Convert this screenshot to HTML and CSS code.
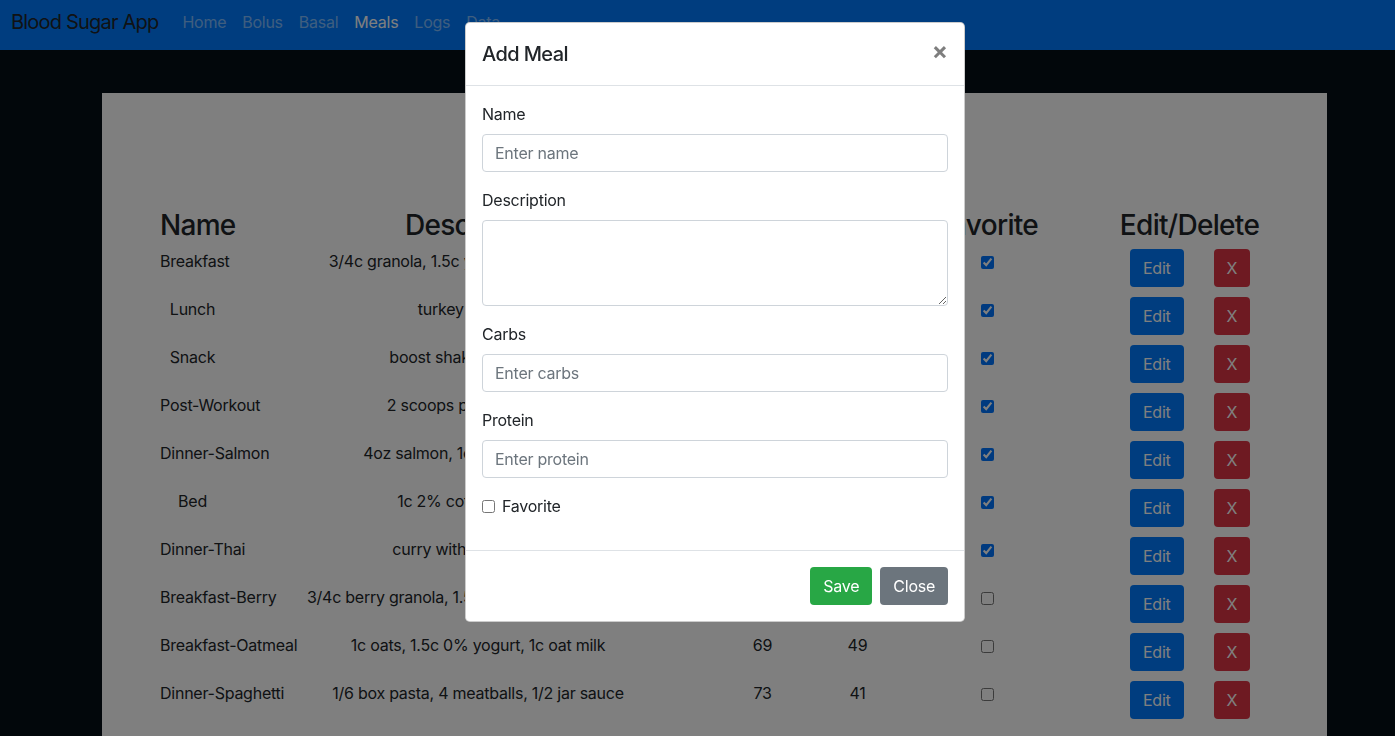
FILE: index.html
```html
<!DOCTYPE html>
<html lang="en">
<head>
<meta charset="utf-8">
<title>Blood Sugar App - Meals</title>
<link rel="stylesheet" href="styles.css">
</head>
<body>
<nav class="navbar">
  <a class="brand" href="#">Blood Sugar App</a>
  <ul class="nav-links">
    <li><a href="#">Home</a></li>
    <li><a href="#">Bolus</a></li>
    <li><a href="#">Basal</a></li>
    <li><a href="#" class="active">Meals</a></li>
    <li><a href="#">Logs</a></li>
    <li><a href="#">Data</a></li>
  </ul>
</nav>

<main class="page">
  <section class="card">
    <div class="meal-table">
      <div class="row head">
        <div class="cell name">Name</div>
        <div class="cell">Description</div>
        <div class="cell">Carbs</div>
        <div class="cell">Protein</div>
        <div class="cell">Favorite</div>
        <div class="cell">Edit/Delete</div>
      </div>
      <div class="row item">
        <div class="cell name">Breakfast</div>
        <div class="cell">3/4c granola, 1.5c yogurt, 1c almond milk</div>
        <div class="cell">72</div>
        <div class="cell">45</div>
        <div class="cell"><input type="checkbox" class="fav" checked></div>
        <div class="cell actions"><button class="btn btn-edit">Edit</button><button class="btn btn-del">X</button></div>
      </div>
      <div class="row item">
        <div class="cell name">Lunch</div>
        <div class="cell">turkey sandwich</div>
        <div class="cell">40</div>
        <div class="cell">30</div>
        <div class="cell"><input type="checkbox" class="fav" checked></div>
        <div class="cell actions"><button class="btn btn-edit">Edit</button><button class="btn btn-del">X</button></div>
      </div>
      <div class="row item">
        <div class="cell name">Snack</div>
        <div class="cell">boost shake, protein bar</div>
        <div class="cell">45</div>
        <div class="cell">35</div>
        <div class="cell"><input type="checkbox" class="fav" checked></div>
        <div class="cell actions"><button class="btn btn-edit">Edit</button><button class="btn btn-del">X</button></div>
      </div>
      <div class="row item">
        <div class="cell name">Post-Workout</div>
        <div class="cell">2 scoops protein powder</div>
        <div class="cell">10</div>
        <div class="cell">50</div>
        <div class="cell"><input type="checkbox" class="fav" checked></div>
        <div class="cell actions"><button class="btn btn-edit">Edit</button><button class="btn btn-del">X</button></div>
      </div>
      <div class="row item">
        <div class="cell name">Dinner-Salmon</div>
        <div class="cell">4oz salmon, 1c rice, vegetables</div>
        <div class="cell">55</div>
        <div class="cell">32</div>
        <div class="cell"><input type="checkbox" class="fav" checked></div>
        <div class="cell actions"><button class="btn btn-edit">Edit</button><button class="btn btn-del">X</button></div>
      </div>
      <div class="row item">
        <div class="cell name">Bed</div>
        <div class="cell">1c 2% cottage cheese</div>
        <div class="cell">10</div>
        <div class="cell">28</div>
        <div class="cell"><input type="checkbox" class="fav" checked></div>
        <div class="cell actions"><button class="btn btn-edit">Edit</button><button class="btn btn-del">X</button></div>
      </div>
      <div class="row item">
        <div class="cell name">Dinner-Thai</div>
        <div class="cell">curry with rice, chicken</div>
        <div class="cell">80</div>
        <div class="cell">35</div>
        <div class="cell"><input type="checkbox" class="fav" checked></div>
        <div class="cell actions"><button class="btn btn-edit">Edit</button><button class="btn btn-del">X</button></div>
      </div>
      <div class="row item">
        <div class="cell name">Breakfast-Berry</div>
        <div class="cell">3/4c berry granola, 1.5c yogurt, 1c almond milk</div>
        <div class="cell">74</div>
        <div class="cell">45</div>
        <div class="cell"><input type="checkbox" class="fav"></div>
        <div class="cell actions"><button class="btn btn-edit">Edit</button><button class="btn btn-del">X</button></div>
      </div>
      <div class="row item">
        <div class="cell name">Breakfast-Oatmeal</div>
        <div class="cell">1c oats, 1.5c 0% yogurt, 1c oat milk</div>
        <div class="cell">69</div>
        <div class="cell">49</div>
        <div class="cell"><input type="checkbox" class="fav"></div>
        <div class="cell actions"><button class="btn btn-edit">Edit</button><button class="btn btn-del">X</button></div>
      </div>
      <div class="row item">
        <div class="cell name">Dinner-Spaghetti</div>
        <div class="cell">1/6 box pasta, 4 meatballs, 1/2 jar sauce</div>
        <div class="cell">73</div>
        <div class="cell">41</div>
        <div class="cell"><input type="checkbox" class="fav"></div>
        <div class="cell actions"><button class="btn btn-edit">Edit</button><button class="btn btn-del">X</button></div>
      </div>
    </div>
  </section>
</main>

<div class="backdrop"></div>

<div class="modal" role="dialog">
  <div class="modal-header">
    <h5 class="modal-title">Add Meal</h5>
    <button class="close" type="button">&times;</button>
  </div>
  <div class="modal-body">
    <div class="field">
      <label class="label">Name</label>
      <input class="input" type="text" placeholder="Enter name">
    </div>
    <div class="field">
      <label class="label">Description</label>
      <textarea class="input textarea" rows="3"></textarea>
    </div>
    <div class="field">
      <label class="label">Carbs</label>
      <input class="input" type="text" placeholder="Enter carbs">
    </div>
    <div class="field">
      <label class="label">Protein</label>
      <input class="input" type="text" placeholder="Enter protein">
    </div>
    <div class="field check">
      <input type="checkbox" class="check-input" id="fav">
      <label for="fav" class="check-label">Favorite</label>
    </div>
  </div>
  <div class="modal-footer">
    <button class="btn btn-save">Save</button>
    <button class="btn btn-close">Close</button>
  </div>
</div>
</body>
</html>
```
FILE: styles.css
```css
* { box-sizing: border-box; }

body {
  margin: 0;
  height: 736px;
  overflow: hidden;
  background: #040e16;
  font-family: Inter, "Liberation Sans", Arial, sans-serif;
  font-size: 16px;
  line-height: 24px;
  letter-spacing: -0.25px;
  color: #212529;
}

/* navbar */
.navbar {
  height: 50px;
  background: #007bff;
  display: flex;
  align-items: center;
  padding: 0 11px 6px;
}
.brand {
  font-size: 20px;
  line-height: 30px;
  letter-spacing: -0.8px;
  color: #212529;
  text-decoration: none;
  margin-right: 16px;
}
.nav-links {
  display: flex;
  list-style: none;
  margin: 0;
  padding: 0;
}
.nav-links a {
  display: block;
  padding: 0 8px;
  color: rgba(255, 255, 255, 0.5);
  text-decoration: none;
}
.nav-links a.active { color: #fff; }

/* page */
.page { padding: 43px 0 0 102px; }
.card {
  width: 1225px;
  height: 700px;
  background: #fff;
  padding: 116px 0 0 58px;
}
.row {
  display: grid;
  grid-template-columns: 65px 506px 63px 127px 132px 273px;
}
.row.head { height: 35px; }
.row.item { height: 48px; }
.cell {
  text-align: center;
  white-space: nowrap;
  padding: 5px 0;
}
.head .cell {
  font-size: 28px;
  font-weight: 500;
  line-height: 33.6px;
  letter-spacing: -0.7px;
  padding: 0;
}
.fav {
  margin: 0;
  width: 13px;
  height: 13px;
  vertical-align: middle;
}
.actions {
  display: flex;
  gap: 30px;
  padding-left: 77px;
}

.btn {
  font-family: inherit;
  font-size: 16px;
  line-height: 24px;
  letter-spacing: -0.25px;
  padding: 6px 12px;
  border: 1px solid transparent;
  border-radius: 4px;
  color: #fff;
  cursor: pointer;
}
.btn-edit { background: #007bff; }
.btn-del { background: #dc3545; }
.btn-save { background: #28a745; margin: 4px; }
.btn-close { background: #6c757d; margin: 4px; }

/* modal */
.backdrop {
  position: fixed;
  inset: 0;
  background: rgba(0, 0, 0, 0.5);
  z-index: 10;
}
.modal {
  position: fixed;
  top: 22px;
  left: 465px;
  width: 500px;
  background: #fff;
  border: 1px solid rgba(0, 0, 0, 0.2);
  border-radius: 4.8px;
  z-index: 20;
}
.modal-header {
  display: flex;
  align-items: flex-start;
  padding: 16px;
  border-bottom: 1px solid #dee2e6;
}
.modal-title {
  margin: 0;
  font-size: 20px;
  font-weight: 500;
  line-height: 30px;
  letter-spacing: -0.6px;
}
.close {
  font-family: inherit;
  font-size: 24px;
  font-weight: 700;
  line-height: 1;
  color: #000;
  opacity: 0.5;
  text-shadow: 0 1px 0 #fff;
  background: none;
  border: 0;
  padding: 16px;
  margin: -16px -16px -16px auto;
}
.modal-body { padding: 16px; }
.field { margin-bottom: 16px; }
.label {
  display: inline-block;
  margin-bottom: 8px;
}
.input {
  display: block;
  width: 100%;
  height: 38px;
  padding: 6px 12px;
  font-family: inherit;
  font-size: 16px;
  line-height: 24px;
  letter-spacing: -0.25px;
  color: #495057;
  background: #fff;
  border: 1px solid #ced4da;
  border-radius: 4px;
}
.input::placeholder { color: #6c757d; }
.textarea {
  height: 86px;
  resize: vertical;
}
.check {
  display: flex;
  align-items: center;
  gap: 7px;
}
.check-input {
  margin: 0;
  width: 13px;
  height: 13px;
}
.modal-footer {
  display: flex;
  justify-content: flex-end;
  align-items: center;
  padding: 12px;
  border-top: 1px solid #dee2e6;
}
```
